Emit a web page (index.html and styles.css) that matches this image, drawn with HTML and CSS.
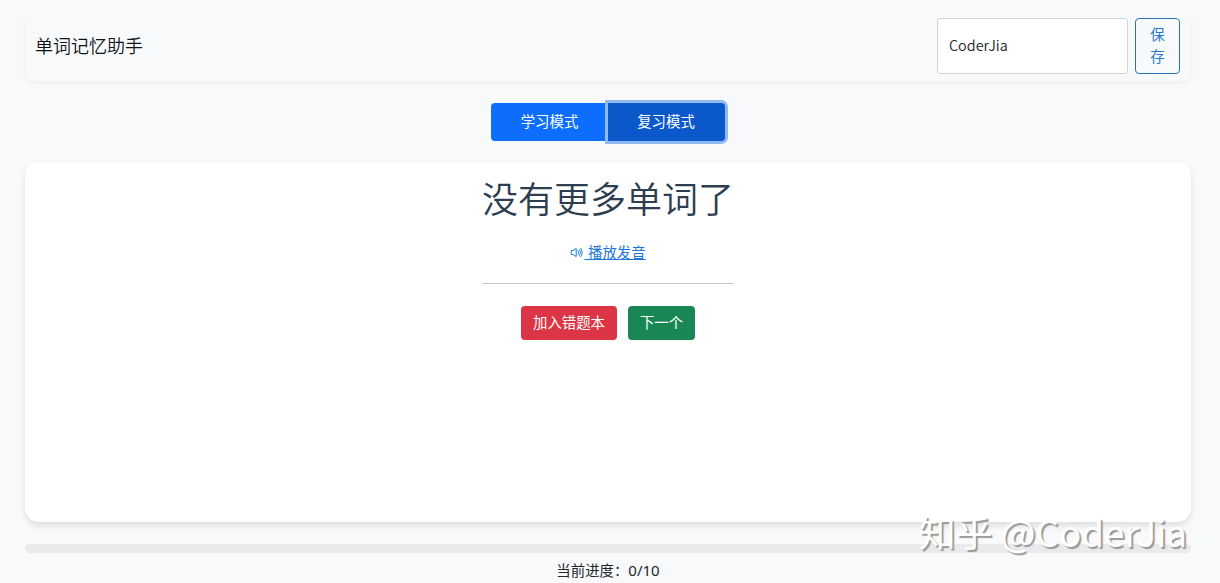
FILE: index.html
```html
<!DOCTYPE html>
<html lang="zh-CN">
<head>
  <meta charset="UTF-8" />
  <meta name="viewport" content="width=device-width, initial-scale=1" />
  <title>单词记忆助手</title>
  <link rel="stylesheet" href="styles.css">
</head>
<body>

  <div class="container">
    <!-- Header -->
    <nav class="navbar">
      <span class="brand">单词记忆助手</span>
      <form class="user-form">
        <input class="user-input" id="username" value="CoderJia" />
        <button class="save-btn" type="button">保<br>存</button>
      </form>
    </nav>

    <!-- Mode switch -->
    <div class="mode-group">
      <button class="mode-btn">学习模式</button>
      <button class="mode-btn active">复习模式</button>
    </div>

    <!-- Word card -->
    <div class="word-card">
      <div class="word-body">
        <h1 class="word">没有更多单词了</h1>
        <a class="play-link" href="#">
          <svg class="play-icon" viewBox="0 0 16 16" fill="none" stroke="currentColor" stroke-width="1.2">
            <path d="M.8 5.5h2.6L7 3v10L3.4 10.5H.8z" />
            <path d="M9 5.6a3.6 3.6 0 0 1 0 4.8M10.6 4a6 6 0 0 1 0 8M12.2 2.4a8.4 8.4 0 0 1 0 11.2" />
          </svg><span class="play-text">&nbsp;播放发音</span>
        </a>
        <hr class="divider">
        <div class="actions">
          <button class="btn btn-danger">加入错题本</button>
          <button class="btn btn-success">下一个</button>
        </div>
      </div>
    </div>

    <!-- Progress -->
    <div class="progress"></div>
    <div class="progress-text">当前进度：<span class="count">0/10</span></div>
  </div>

  <div class="watermark">知乎 @CoderJia</div>

</body>
</html>
```
FILE: styles.css
```css
* {
  box-sizing: border-box;
}

body {
  margin: 0;
  height: 583px;
  overflow: hidden;
  background: #f8f9fb;
  color: #212529;
  font-family: "Noto Sans", "Noto Sans CJK SC", sans-serif;
  font-size: 14.4px;
  line-height: 22px;
}

button, input {
  font-family: inherit;
  font-size: inherit;
  line-height: 22px;
}

.container {
  width: 1166px;
  margin: 0 0 0 25px;
  padding-top: 11px;
}

/* Header */
.navbar {
  display: flex;
  justify-content: space-between;
  align-items: center;
  height: 70px;
  padding: 0 11px 0 10px;
  border-radius: 9px;
  box-shadow: 0 2px 4px rgba(0,0,0,0.05);
}

.brand {
  display: block;
  padding-bottom: 2px;
  font-family: "Noto Sans CJK SC", sans-serif;
  font-size: 18px;
  font-weight: 350;
  color: #111417;
}

.user-form {
  display: flex;
  gap: 7px;
}

.user-input {
  width: 191px;
  height: 56px;
  padding: 0 11px 3px;
  border: 1px solid #ced4da;
  border-radius: 3px;
  background: white;
  color: #212529;
  font-family: "Noto Sans CJK SC", sans-serif;
  font-size: 14.4px;
  font-weight: 350;
}

.save-btn {
  width: 45px;
  height: 56px;
  padding: 0;
  border: 1px solid #2573b8;
  border-radius: 4px;
  background: transparent;
  color: #2878d0;
}

/* Mode switch */
.mode-group {
  display: flex;
  justify-content: center;
  margin: 22px 0 21px;
}

.mode-btn {
  width: 117px;
  height: 38px;
  padding: 0;
  border: none;
  border-radius: 4px 0 0 4px;
  background: #0d6efd;
  color: white;
}

.mode-btn.active {
  padding-right: 1px;
  border-radius: 0 4px 4px 0;
  background: #0a58ca;
  box-shadow: 0 0 0 3px #92b9f5;
}

/* Word card */
.word-card {
  display: flex;
  justify-content: center;
  height: 360px;
  padding-top: 12px;
  border-radius: 14px;
  background: white;
  box-shadow: 0 4px 6px rgba(0,0,0,0.1);
}

.word-body {
  width: 252px;
  text-align: center;
}

.word {
  margin: 0 0 21px;
  font-family: "Noto Sans CJK SC", sans-serif;
  font-size: 36px;
  font-weight: 350;
  line-height: 47px;
  color: #2c3e50;
  white-space: nowrap;
}

.play-link {
  display: flex;
  justify-content: center;
  align-items: center;
  color: #1b77dc;
  text-decoration: none;
}

.play-text {
  text-decoration: underline;
}

.play-icon {
  width: 14px;
  height: 13px;
  margin-bottom: 2px;
}

.divider {
  margin: 19px 0 22px;
  border: none;
  border-top: 1px solid #c4c5c7;
}

.actions {
  display: flex;
  justify-content: center;
  gap: 11px;
}

.btn {
  height: 34px;
  padding: 0;
  border: none;
  border-radius: 4px;
  color: white;
  white-space: nowrap;
}

.btn-danger {
  width: 96px;
  background: #dc3545;
}

.btn-success {
  width: 67px;
  background: #198754;
}

/* Progress */
.progress {
  height: 9px;
  margin: 22px 0 6px;
  border-radius: 5px;
  background: #e9eaec;
}

.progress-text {
  text-align: center;
}

.count {
  font-size: 15px;
}

.watermark {
  position: absolute;
  right: 33px;
  bottom: 27px;
  font-family: "Noto Sans CJK SC", sans-serif;
  font-size: 36.8px;
  line-height: 50px;
  color: white;
  text-shadow: 2px 2px 1px #999;
  white-space: nowrap;
}
```
